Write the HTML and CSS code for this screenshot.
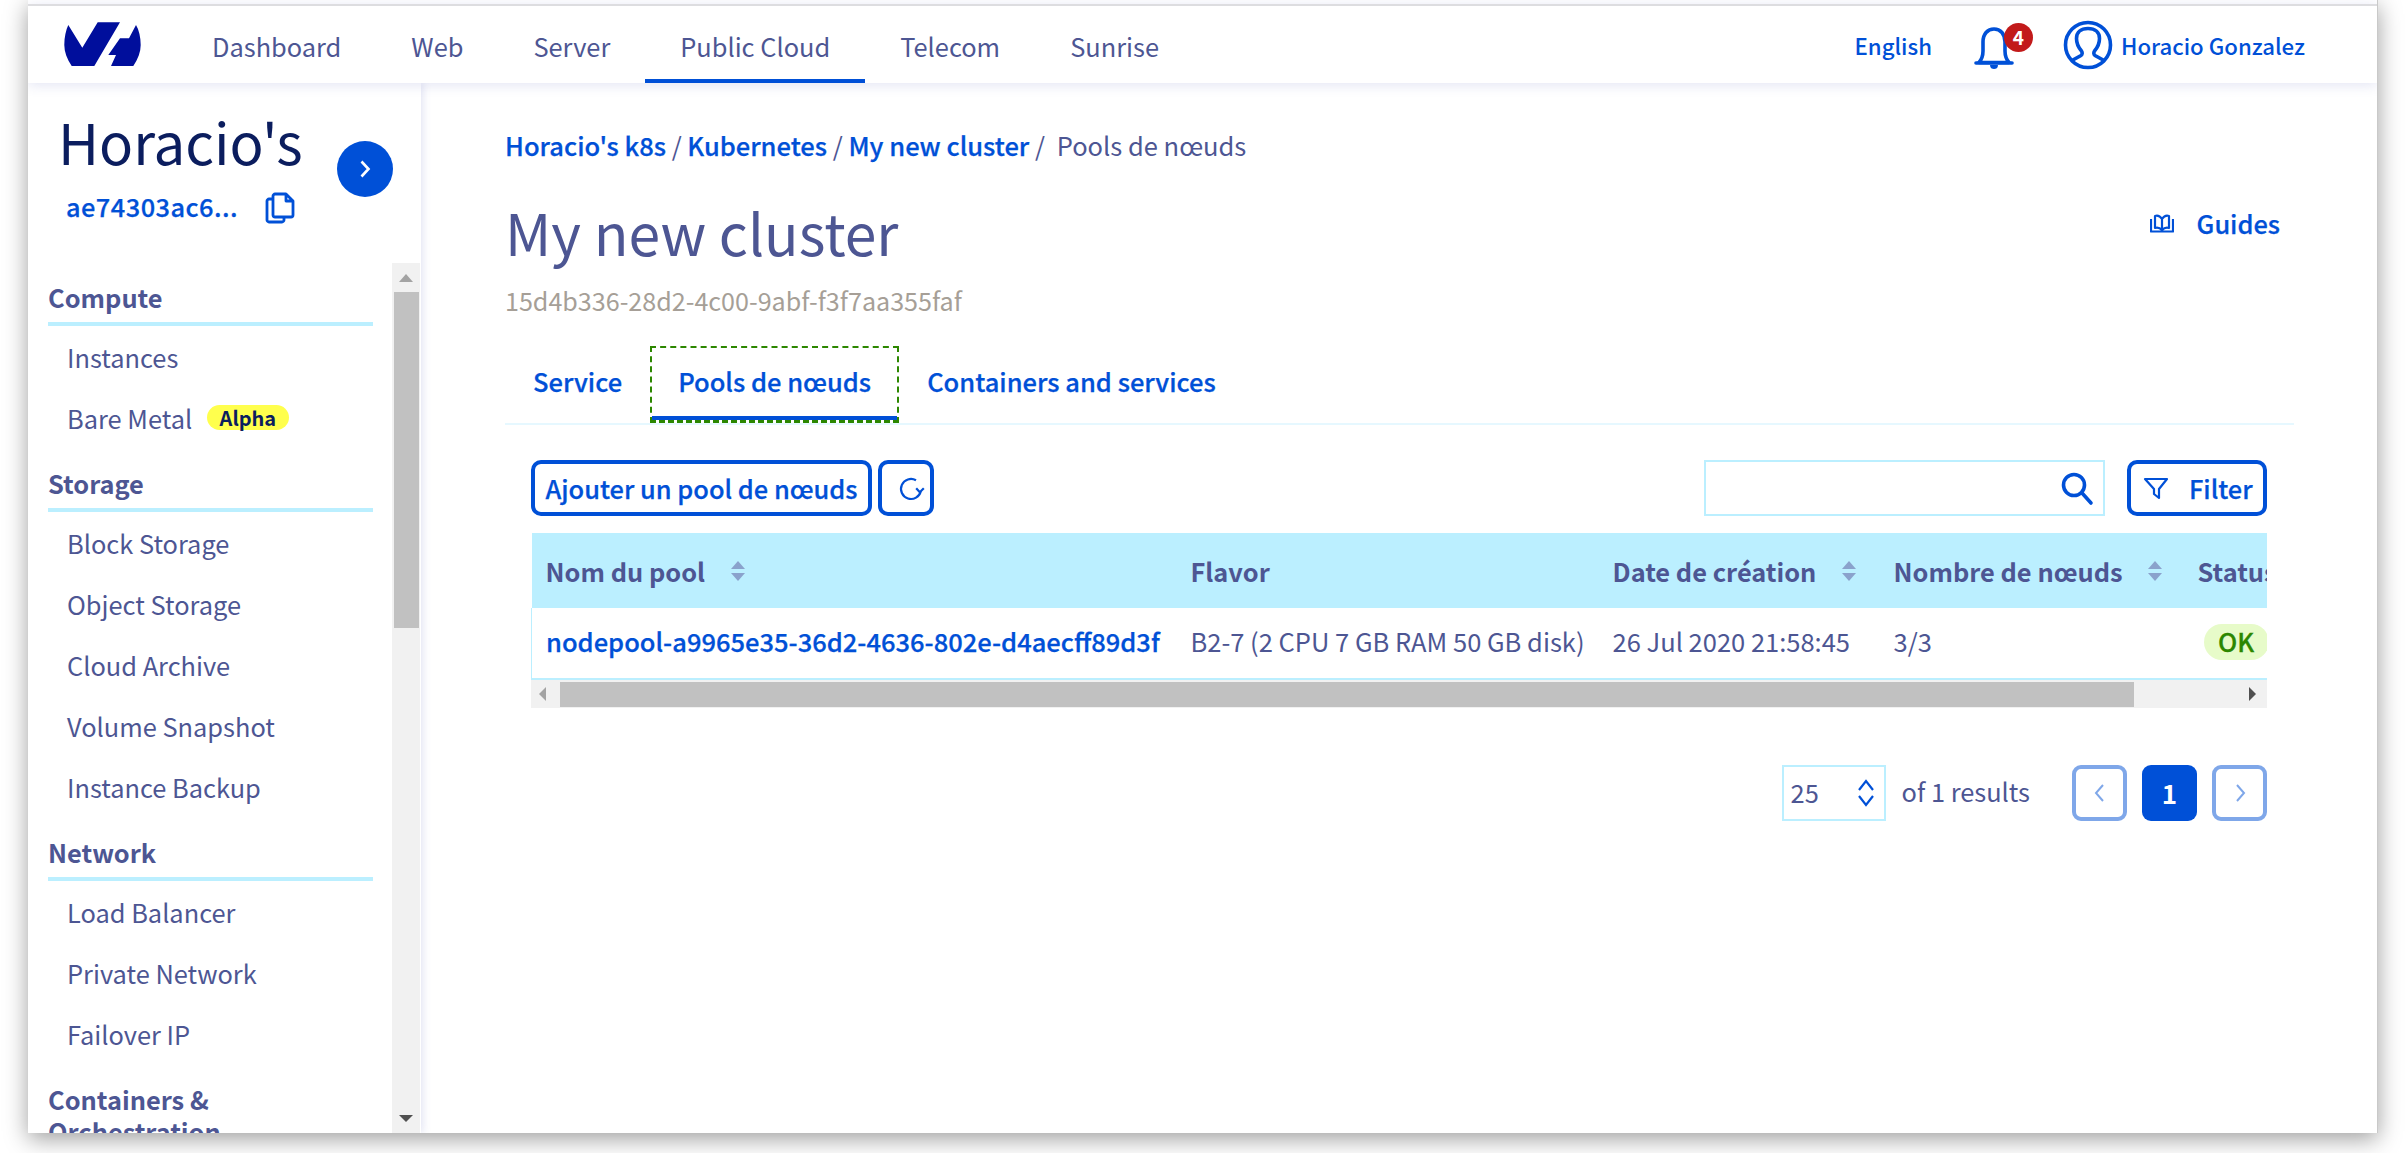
FILE: index.html
```html
<!DOCTYPE html>
<html lang="en">
<head>
<meta charset="utf-8">
<title>My new cluster</title>
<link rel="stylesheet" href="styles.css">
</head>
<body>
<div class="window">
  <header class="topbar">
    <svg class="logo" viewBox="0 0 100 60" aria-label="OVH"><path d="M13.3 10 L27.3 32.7 L42.7 7.3 H65 L39.3 51 H16.7 C12 44 9.3 37 9.3 30 C9.3 22 11 15 13.3 10Z"/><path d="M81 10 C84 15 85.7 22 85.7 30 C85.7 37 83 44 78.3 51 H56 L61 40 H53.3 L65 23.3 H74Z"/></svg>
    <nav class="topnav">
      <a class="topnav-item">Dashboard</a>
      <a class="topnav-item">Web</a>
      <a class="topnav-item">Server</a>
      <a class="topnav-item topnav-active">Public Cloud</a>
      <a class="topnav-item">Telecom</a>
      <a class="topnav-item">Sunrise</a>
    </nav>
    <div class="topright">
      <a class="top-link">English</a>
      <div class="bell">
        <svg class="bell-icon" viewBox="0 0 46 46"><path class="ln" d="M6 35.5 C9 32 10 29 10 24 V15 C10 7 14.500 2 21 2 C27.500 2 32 7 32 15 V24 C32 29 33 32 36 35.500Z" stroke-linejoin="round"/><path class="ln" d="M3 36 H39" stroke-linecap="round"/><path class="fl" d="M17 38 H25 C25 41 23 42 21 42 C19 42 17 41 17 38Z"/></svg>
        <span class="badge">4</span>
      </div>
      <svg class="avatar" viewBox="0 0 52 52"><circle class="ln" cx="26" cy="26" r="22.500"/><path class="ln" d="M9 42 L19 36.500 C20.500 35.500 20.500 33.500 19.500 32 C16 28 14.500 24 14.500 19.500 C14.500 13 19 9.500 26 9.500 C33 9.500 37.500 13 37.500 19.500 C37.500 24 36 28 32.500 32 C31.500 33.500 31.500 35.500 33 36.500 L43 42"/></svg>
      <a class="top-link user-name">Horacio Gonzalez</a>
    </div>
  </header>

  <div class="body-row">
    <aside class="sidebar">
      <div class="project">
        <div class="project-text">
          <div class="project-name">Horacio's</div>
          <div class="project-id-row">
            <span class="project-id">ae74303ac6...</span>
            <svg class="copy-icon" viewBox="0 0 32 34"><path class="ln" d="M11 4 H22 L29 11 V25 C29 26.500 28 27 27 27 H11 C10 27 9 26.500 9 25 V6 C9 5 10 4 11 4Z M22 4 V11 H29" stroke-linejoin="round"/><path class="ln" d="M9 9 H5 C4 9 3 10 3 11 V30 C3 31 4 32 5 32 H18 C19 32 20 31 20 30 V27" stroke-linejoin="round"/></svg>
          </div>
        </div>
        <span class="round-btn"><svg viewBox="0 0 20 20"><path d="M6.500 2.500 L13.500 10 L6.500 17.500"/></svg></span>
      </div>
      <div class="side-scroll">
        <nav class="sidenav">
          <h3 class="side-title side-first">Compute</h3>
          <a class="side-item">Instances</a>
          <a class="side-item">Bare Metal <span class="alpha">Alpha</span></a>
          <h3 class="side-title">Storage</h3>
          <a class="side-item">Block Storage</a>
          <a class="side-item">Object Storage</a>
          <a class="side-item">Cloud Archive</a>
          <a class="side-item">Volume Snapshot</a>
          <a class="side-item">Instance Backup</a>
          <h3 class="side-title">Network</h3>
          <a class="side-item">Load Balancer</a>
          <a class="side-item">Private Network</a>
          <a class="side-item">Failover IP</a>
          <h3 class="side-title">Containers &amp; Orchestration</h3>
        </nav>
        <div class="vscroll">
          <span class="arrow-up"></span>
          <span class="vthumb"></span>
          <span class="arrow-down"></span>
        </div>
      </div>
    </aside>

    <main class="main">
      <div class="crumbs">
        <a>Horacio's k8s</a> <span class="sep">/</span> <a>Kubernetes</a> <span class="sep">/</span> <a>My new cluster</a> <span class="sep">/</span> <span class="crumb-last">Pools de nœuds</span>
      </div>
      <div class="title-row">
        <h1 class="title">My new cluster</h1>
        <a class="guides">
          <svg class="guides-icon" viewBox="0 0 24 20"><path class="ln-thin" d="M5 3 V15 C8 14 10 15 12 17 C14 15 16 14 19 15 V3 C16 2 14 3 12 6 C10 3 8 2 5 3Z M12 6 V17 M1 6 V18.500 H23 V6" stroke-linejoin="round"/></svg>
          <span>Guides</span>
        </a>
      </div>
      <div class="uuid">15d4b336-28d2-4c00-9abf-f3f7aa355faf</div>

      <div class="tabs">
        <a class="tab"><span class="tab-label">Service</span></a>
        <a class="tab tab-focus"><span class="tab-label tab-label-active">Pools de nœuds</span></a>
        <a class="tab"><span class="tab-label">Containers and services</span></a>
      </div>

      <div class="panel">
        <div class="toolbar">
          <button class="btn btn-add">Ajouter un pool de nœuds</button>
          <button class="btn btn-refresh"><svg viewBox="0 0 28 28"><path class="ln-thin" d="M19 5.300 A10 10 0 1 0 23.800 16"/><path class="ln-thin" d="M19.200 13.200 L22.800 17.200 L26.800 13.200"/></svg></button>
          <div class="spacer"></div>
          <div class="search">
            <svg viewBox="0 0 36 36"><circle class="ln" cx="15" cy="15" r="10.500"/><path class="ln" d="M23 23 L32 33" stroke-linecap="round"/></svg>
          </div>
          <button class="btn btn-filter">
            <svg viewBox="0 0 26 24"><path class="ln-thin" d="M2 3 H24 L16 13 V22 L11 18 V13 Z M2 3" stroke-linejoin="round"/></svg>
            <span>Filter</span>
          </button>
        </div>

        <div class="table-clip">
          <table class="table">
            <thead>
              <tr>
                <th class="col-name"><span class="th-in">Nom du pool<i class="sort"></i></span></th>
                <th class="col-flavor">Flavor</th>
                <th class="col-date"><span class="th-in">Date de création<i class="sort"></i></span></th>
                <th class="col-nodes"><span class="th-in">Nombre de nœuds<i class="sort"></i></span></th>
                <th class="col-status">Status</th>
              </tr>
            </thead>
            <tbody>
              <tr>
                <td class="cell-link">nodepool-a9965e35-36d2-4636-802e-d4aecff89d3f</td>
                <td>B2-7 (2 CPU 7 GB RAM 50 GB disk)</td>
                <td>26 Jul 2020 21:58:45</td>
                <td>3/3</td>
                <td><span class="ok">OK</span></td>
              </tr>
            </tbody>
          </table>
        </div>
        <div class="hscroll">
          <span class="arrow-left"></span>
          <span class="hthumb"></span>
          <span class="arrow-right"></span>
        </div>

        <div class="pager">
          <div class="page-size">
            <span>25</span>
            <svg viewBox="0 0 20 32"><path class="ln-thin" d="M3 13 L10 4 L17 13 M3 19 L10 28 L17 19"/></svg>
          </div>
          <span class="results">of 1 results</span>
          <button class="page-btn page-ghost"><svg viewBox="0 0 16 24"><path d="M11 4 L4 12 L11 20"/></svg></button>
          <button class="page-btn page-current">1</button>
          <button class="page-btn page-ghost"><svg viewBox="0 0 16 24"><path d="M5 4 L12 12 L5 20"/></svg></button>
        </div>
      </div>
    </main>
  </div>
</div>
</body>
</html>
```

FILE: styles.css
```css
* { box-sizing: border-box; }
html, body { margin: 0; padding: 0; background: #fff; }
body {
  height: 1153px;
  overflow: hidden;
  padding: 0 29px 0 28px;
  font-family: "Noto Sans CJK SC", "Noto Sans", sans-serif;
  color: #4d5693;
}
a { color: inherit; text-decoration: none; }
.ln { fill: none; stroke: #0050d7; stroke-width: 3.6; }
.ln-thin { fill: none; stroke: #0050d7; stroke-width: 2.2; }
.fl { fill: #0050d7; }

.window {
  width: 2350px;
  height: 1133px;
  background: #fff;
  display: flex;
  flex-direction: column;
  overflow: hidden;
  border-right: 1px solid #c9c9c9;
  box-shadow: 0 6px 22px rgba(0, 0, 0, .38);
}

/* top bar */
.topbar {
  position: relative;
  z-index: 2;
  flex: none;
  height: 79px;
  margin-top: 4px;
  border-top: 2px solid #dddde0;
  display: flex;
  align-items: flex-start;
  padding-left: 27px;
  background: #fff;
  box-shadow: 0 2px 12px rgba(77, 86, 180, .16);
}
.logo { width: 100px; height: 60px; margin-top: 9px; flex: none; fill: #000e9c; }
.topnav { display: flex; margin-left: 22px; height: 77px; }
.topnav-item {
  padding: 0 35px;
  height: 77px;
  line-height: 80px;
  font-size: 25.400px;
  color: #4d5693;
  border-bottom: 4px solid transparent;
}
.topnav-active { border-bottom-color: #0050d7; }
.topright { margin-left: auto; display: flex; align-items: center; height: 77px; padding-right: 72px; }
.top-link { font-size: 22.200px; line-height: 36px; color: #0050d7; font-weight: 500; }
.bell { position: relative; width: 60px; height: 56px; margin-left: 41px; }
.bell-icon { position: absolute; left: 0; top: 10px; width: 46px; height: 46px; }
.badge {
  position: absolute;
  left: 31px;
  top: 6px;
  width: 29px;
  height: 29px;
  border-radius: 50%;
  background: #c21a1a;
  color: #fff;
  font-size: 19px;
  font-weight: 700;
  line-height: 28px;
  text-align: center;
}
.avatar { width: 52px; height: 52px; margin-left: 29px; flex: none; }
.user-name { margin-left: 7px; }

/* layout */
.body-row { flex: 1; display: flex; min-height: 0; }

/* sidebar */
.sidebar {
  position: relative;
  z-index: 1;
  width: 393px;
  flex: none;
  display: flex;
  flex-direction: column;
  background: #fff;
  box-shadow: 2px 0 8px rgba(77, 86, 180, .16);
}
.project { height: 180px; flex: none; display: flex; padding: 23px 0 0 30px; }
.project-text { width: 279px; }
.project-name { font-size: 56.400px; line-height: 70px; color: #0b1d5e; white-space: nowrap; }
.project-id-row { display: flex; align-items: center; margin: 12px 0 0 8px; }
.project-id { font-size: 25.400px; line-height: 36px; color: #0050d7; font-weight: 500; letter-spacing: .45px; -webkit-text-stroke: .25px #0050d7; }
.copy-icon { width: 32px; height: 34px; margin: 2px 0 0 26px; flex: none; }
.copy-icon .ln { stroke-width: 2.800; }
.round-btn {
  width: 56px;
  height: 56px;
  margin-top: 35px;
  border-radius: 50%;
  background: #0050d7;
  display: flex;
  align-items: center;
  justify-content: center;
}
.round-btn svg { width: 20px; height: 20px; fill: none; stroke: #fff; stroke-width: 2.600; }

.side-scroll { flex: 1; min-height: 0; display: flex; }
.sidenav { flex: 1; min-width: 0; overflow: hidden; padding: 0 19px 0 20px; }
.side-title {
  margin: 0;
  padding-top: 19px;
  padding-bottom: 9px;
  font-size: 25.400px;
  line-height: 32px;
  font-weight: 700;
  color: #4d5693;
  border-bottom: 4px solid #bbefff;
}
.side-first { padding-top: 18px; }
.side-title:last-child { border-bottom: none; }
.side-item {
  display: flex;
  align-items: center;
  height: 61px;
  padding-left: 19px;
  font-size: 25.400px;
  color: #4d5693;
  white-space: pre;
}
.alpha {
  display: inline-block;
  margin-left: 9px;
  width: 82px;
  height: 25px;
  border-radius: 13px;
  background: #ffff4d;
  color: #0b1d5e;
  font-size: 20px;
  line-height: 25px;
  font-weight: 700;
  text-align: center;
}
.vscroll {
  width: 28px;
  flex: none;
  margin-right: 1px;
  background: #f1f1f1;
  display: flex;
  flex-direction: column;
  align-items: center;
}
.arrow-up {
  margin-top: 11px;
  border-left: 7px solid transparent;
  border-right: 7px solid transparent;
  border-bottom: 8px solid #a3a3a3;
}
.vthumb { width: 25px; height: 336px; margin-top: 10px; background: #c1c1c1; }
.arrow-down {
  margin-top: auto;
  margin-bottom: 11px;
  border-left: 7px solid transparent;
  border-right: 7px solid transparent;
  border-top: 7px solid #505050;
}

/* main */
.main { flex: 1; min-width: 0; padding: 44px 83px 0 84px; }
.crumbs { font-size: 25.500px; line-height: 36px; white-space: nowrap; }
.crumbs a { color: #0050d7; font-weight: 500; -webkit-text-stroke: .25px #0050d7; }
.sep { color: #4d5693; }
.crumb-last { margin-left: 6px; color: #4d5693; }
.title-row { display: flex; justify-content: space-between; align-items: flex-start; height: 80px; margin-top: 32px; padding-right: 14px; }
.title { margin: -4px 0 0; font-size: 57px; line-height: 80px; font-weight: 400; color: #4d5693; }
.guides { display: flex; align-items: center; margin-top: 10px; font-size: 25.400px; line-height: 36px; font-weight: 500; color: #0050d7; -webkit-text-stroke: .25px #0050d7; }
.guides-icon { width: 24px; height: 20px; margin-right: 23px; }
.uuid { margin-top: 8px; font-size: 25.100px; line-height: 34px; color: #a69f97; }

.tabs { display: flex; margin-top: 29px; border-bottom: 2px solid #e6f8ff; height: 79px; }
.tab { border: 2px dashed transparent; border-bottom-width: 3px; height: 77px; }
.tab-focus { border-color: #2c8700; }
.tab-label {
  display: block;
  height: 72px;
  padding: 0 26px;
  line-height: 66px;
  font-size: 25.500px;
  font-weight: 500;
  color: #0050d7;
  -webkit-text-stroke: .25px #0050d7;
  border-bottom: 4px solid transparent;
}
.tab-label-active { border-bottom-color: #0050d7; }

.panel { padding: 0 27px 0 26px; }
.toolbar { display: flex; margin-top: 35px; height: 56px; }
.spacer { flex: 1; }
.btn {
  height: 56px;
  border: 4px solid #0050d7;
  border-radius: 10px;
  background: #fff;
  color: #0050d7;
  font-family: inherit;
  font-size: 25.400px;
  font-weight: 500;
  -webkit-text-stroke: .25px #0050d7;
  padding: 0;
  display: flex;
  align-items: center;
  justify-content: center;
}
.btn-add { width: 341px; }
.btn-refresh { width: 56px; margin-left: 6px; }
.btn-refresh svg { width: 28px; height: 28px; margin: 2px 0 0 9px; }
.search {
  width: 401px;
  height: 56px;
  border: 2px solid #bbefff;
  display: flex;
  align-items: center;
  justify-content: flex-end;
  padding-right: 8px;
}
.search svg { width: 36px; height: 36px; }
.btn-filter { width: 140px; margin-left: 22px; justify-content: flex-start; padding-left: 12px; }
.btn-filter svg { width: 26px; height: 24px; margin-right: 20px; }

.table-clip { width: 1736px; margin-top: 17px; overflow: hidden; }
.table { width: 1786px; table-layout: fixed; border-collapse: collapse; }
th {
  height: 75px;
  padding: 0 14px;
  text-align: left;
  font-size: 25.400px;
  font-weight: 700;
  background: #bbefff;
  color: #4d5693;
  white-space: nowrap;
}
td {
  height: 71px;
  padding: 0 14px 6px;
  font-size: 25.500px;
  color: #4d5693;
  white-space: nowrap;
  border-bottom: 2px solid #bbefff;
}
tbody td:first-child { border-left: 1px solid #bbefff; }
.col-name { width: 645px; }
.col-flavor { width: 422px; }
.col-date { width: 281px; }
.col-nodes { width: 304px; }
.col-status { width: 134px; }
.th-in { display: flex; align-items: center; }
.sort {
  display: inline-block;
  position: relative;
  width: 14px;
  height: 20px;
  flex: none;
}
.sort::before, .sort::after {
  content: "";
  position: absolute;
  left: 0;
  border-left: 7px solid transparent;
  border-right: 7px solid transparent;
}
.sort::before { top: 0; border-bottom: 8px solid #8aa2cc; }
.sort::after { bottom: 0; border-top: 8px solid #8aa2cc; }
.col-name .sort { margin-left: 26px; }
.col-date .sort { margin-left: 26px; }
.col-nodes .sort { margin-left: 25px; }
.cell-link { color: #0050d7; font-weight: 500; -webkit-text-stroke: .25px #0050d7; }
.ok {
  display: inline-block;
  width: 65px;
  height: 36px;
  margin: 4px 0 0 6px;
  border-radius: 18px;
  background: #e7fbc9;
  color: #2c8700;
  font-weight: 500;
  -webkit-text-stroke: .3px #2c8700;
  line-height: 33px;
  text-align: center;
}

.hscroll { width: 1736px; height: 28px; background: #f1f1f1; display: flex; align-items: center; }
.arrow-left {
  flex: none;
  margin-left: 8px;
  border-top: 7px solid transparent;
  border-bottom: 7px solid transparent;
  border-right: 7px solid #a3a3a3;
}
.hthumb { width: 1574px; height: 25px; margin-left: 14px; background: #c1c1c1; }
.arrow-right {
  flex: none;
  margin-left: auto;
  margin-right: 11px;
  border-top: 7px solid transparent;
  border-bottom: 7px solid transparent;
  border-left: 7px solid #505050;
}

.pager { width: 1736px; display: flex; justify-content: flex-end; align-items: center; margin-top: 57px; height: 56px; }
.page-size {
  width: 104px;
  height: 56px;
  border: 2px solid #bbefff;
  display: flex;
  align-items: center;
  justify-content: space-between;
  padding: 0 8px 3px 7px;
  font-size: 25.400px;
}
.page-size svg { width: 20px; height: 32px; margin-top: 3px; }
.results { margin: 0 42px 4px 16px; font-size: 25.400px; }
.page-btn {
  width: 55px;
  height: 56px;
  padding: 0;
  border-radius: 9px;
  font-family: inherit;
  display: flex;
  align-items: center;
  justify-content: center;
}
.page-ghost { background: #fff; border: 4px solid #7fa7e9; }
.page-ghost svg { width: 16px; height: 24px; fill: none; stroke: #7fa7e9; stroke-width: 2; }
.page-current { margin: 0 15px; padding-bottom: 2px; background: #0050d7; border: none; color: #fff; font-size: 26px; font-weight: 700; }
```
